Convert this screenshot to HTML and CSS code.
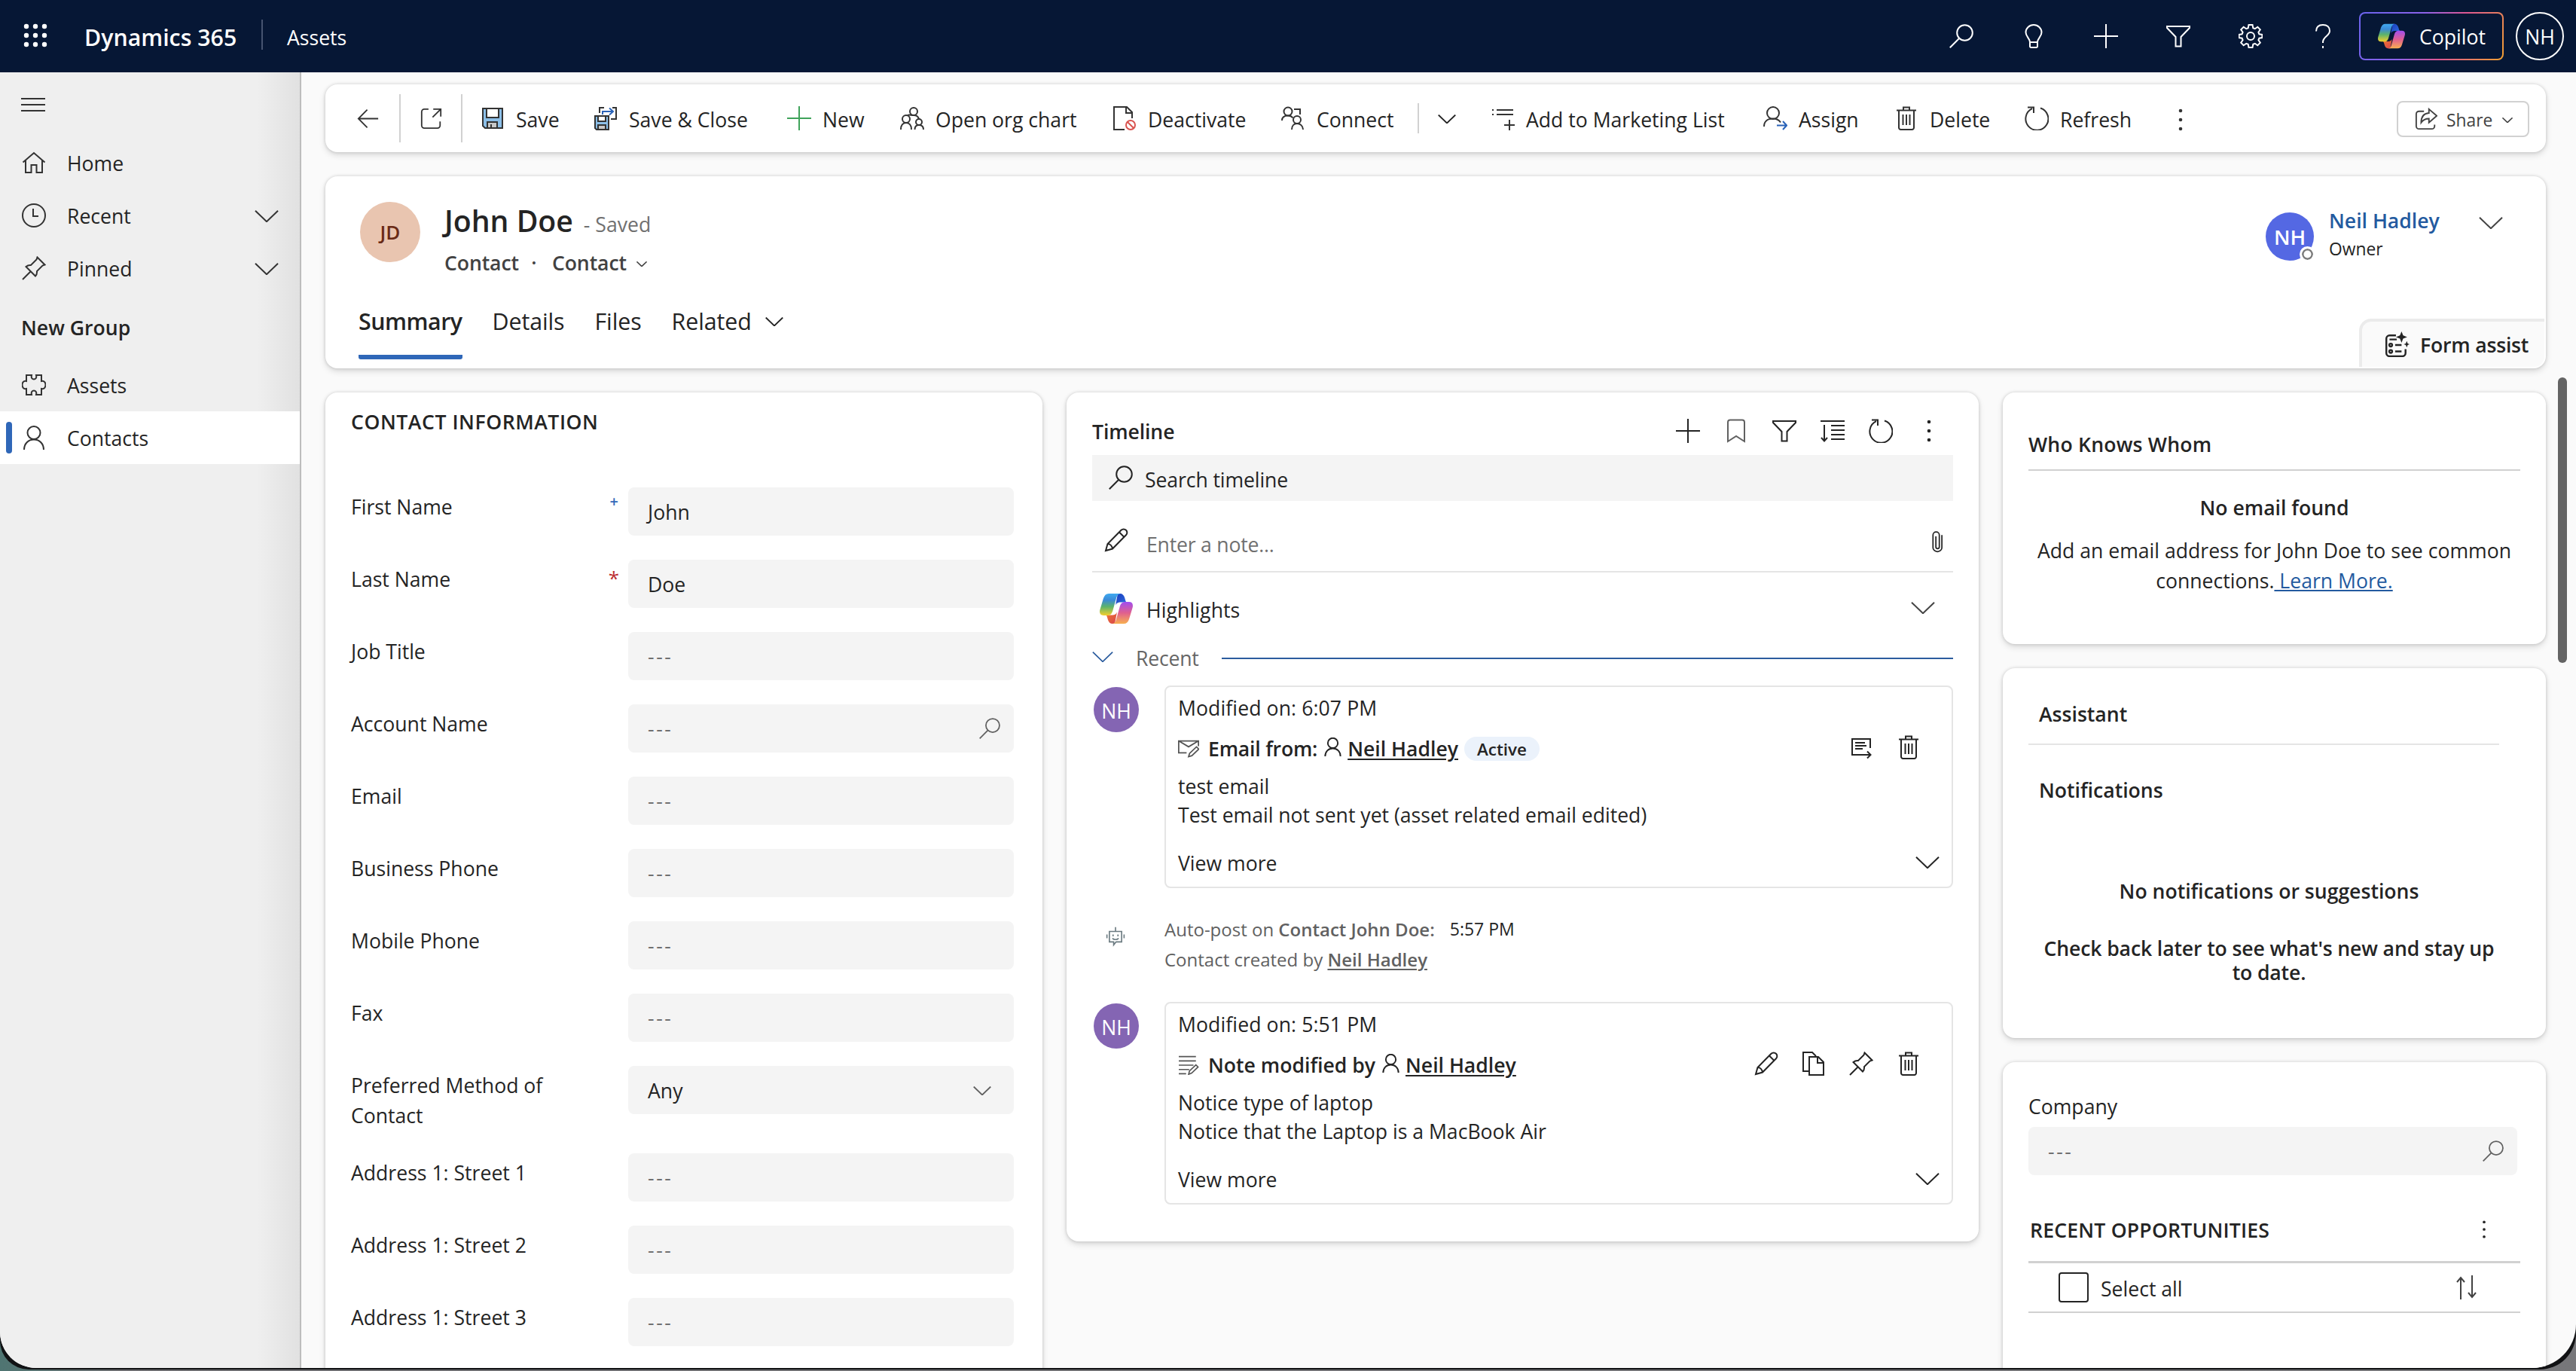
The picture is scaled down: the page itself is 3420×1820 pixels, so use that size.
FILE: index.html
```html
<!DOCTYPE html>
<html lang="en">
<head>
<meta charset="utf-8">
<title>Contact: John Doe - Dynamics 365</title>
<link rel="stylesheet" href="styles.css">
</head>
<body>
<svg class="defs" width="0" height="0" aria-hidden="true">
  <defs>
    <linearGradient id="cpA" x1="0" y1="0" x2="0" y2="1"><stop offset="0" stop-color="#3fa9f0"/><stop offset=".3" stop-color="#3b8ad6"/><stop offset=".6" stop-color="#5cb36b"/><stop offset="1" stop-color="#f4cf2c"/></linearGradient>
    <linearGradient id="cpB" x1="0" y1="0" x2="0" y2="1"><stop offset="0" stop-color="#a04df0"/><stop offset=".5" stop-color="#e0608f"/><stop offset="1" stop-color="#f8b050"/></linearGradient>
    <linearGradient id="cpC" x1="0" y1="0" x2="1" y2="1"><stop offset="0" stop-color="#1a3bbd"/><stop offset="1" stop-color="#2f6fe0"/></linearGradient>
    <linearGradient id="cpD" x1="0" y1="0" x2="1" y2="1"><stop offset="0" stop-color="#f07a2c"/><stop offset="1" stop-color="#d8434f"/></linearGradient>
  </defs>
  <symbol id="copilot" viewBox="0 0 44 40">
    <path fill="url(#cpC)" d="M24 0h3c3 0 5 2 6 5l1.500 5c.5 1 1 1.500 2 1.500H28c-4 0-5.500 1-7 4z"/>
    <path fill="url(#cpD)" d="M20 40h-3c-3 0-5-2-6-5l-1.500-5c-.5-1-1-1.500-2-1.500H16c4 0 5.500-1 7-4z"/>
    <path fill="url(#cpA)" d="M12 0h16c-3 0-5 2-6 6l-4.500 16c-1.300 5-3.500 7-7.500 7H5c-4 0-6-3-4.500-8L5 6C6.500 2 8.500 0 12 0z"/>
    <path fill="url(#cpB)" d="M32 40H16c3 0 5-2 6-6l4.500-16c1.300-5 3.500-7 7.500-7h5c4 0 6 3 4.500 8L39 34c-1.500 4-3.500 6-7 6z"/>
  </symbol>
  <symbol id="search" viewBox="0 0 32 32"><circle cx="20.500" cy="11.500" r="10.300"/><path d="M13 19 .8 31.200"/></symbol>
  <symbol id="bulb" viewBox="0 0 32 32"><path d="M11 24c0-5-5.500-7.500-5.500-13a10.500 10 0 0 1 21 0c0 5.500-5.500 8-5.500 13zM11 24v5.500a1.500 1.500 0 0 0 1.500 1.500h7a1.500 1.500 0 0 0 1.500-1.500V24"/></symbol>
  <symbol id="plus" viewBox="0 0 32 32"><path d="M16 0v32M0 16h32"/></symbol>
  <symbol id="filter" viewBox="0 0 32 32"><path d="M1 3h30v2L19.500 17v12.500h-7V17L1 5z"/></symbol>
  <symbol id="gear" viewBox="0 0 32 32"><circle cx="16" cy="16" r="5"/><path d="M13.500 1h5l.8 4.200 2.500 1 3.500-2.400 3.500 3.500-2.400 3.500 1 2.500 4 .7v4l-4 .7-1 2.500 2.400 3.500-3.500 3.500-3.500-2.400-2.500 1-.8 4.200h-5l-.8-4.200-2.500-1-3.500 2.400-3.500-3.500 2.400-3.500-1-2.500-4-.7v-4l4-.7 1-2.500-2.400-3.500 3.500-3.500 3.500 2.400 2.500-1z"/></symbol>
  <symbol id="help" viewBox="0 0 32 32"><path d="M7 9.500C7 4 10.500 1 16 1s9 3 9 8c0 7-9 7-9 15v1M16 29v3"/></symbol>
  <symbol id="home" viewBox="0 0 32 32"><path d="M1.500 15.500 16 3l14.500 12.500M5 13v16h7.500V19h7v10H27V13"/></symbol>
  <symbol id="clock" viewBox="0 0 32 32"><circle cx="16" cy="16" r="15"/><path d="M15 7v10h7"/></symbol>
  <symbol id="pin" viewBox="0 0 32 32"><path d="M20.500 1.500 30.500 11.500l-3 1-7.500 7.500c.3 3-.5 5-2 6.500L5.500 14c2-1.700 4-2.300 6.500-2l7.500-7.500zM11.500 20.500 1 31"/></symbol>
  <symbol id="puzzle" viewBox="0 0 32 32"><path d="M6 3h7c-1 4 1 5.500 3 5.500S20 7 19 3h7v8c4-1 5.500 2.500 5.500 5S30 22 26 21v8h-7c1-4-1-5.500-3-5.500S12 25 13 29H6v-8c-4 1-5.500-2.500-5.500-5S2 10 6 11z"/></symbol>
  <symbol id="person" viewBox="0 0 32 32"><circle cx="16" cy="9.500" r="8.500"/><path d="M3 32c0-8 5.500-13.500 13-13.500S29 24 29 32"/></symbol>
  <symbol id="chev" viewBox="0 0 32 16"><path d="M1 .8 16 15.200 31 .8"/></symbol>
  <symbol id="back" viewBox="0 0 32 32"><path d="M31 16H2M15 3 2 16l13 13"/></symbol>
  <symbol id="popout" viewBox="0 0 32 32"><path d="M12 2H6a4 4 0 0 0-4 4v20a4 4 0 0 0 4 4h19a4 4 0 0 0 4-4v-6M19 2h11v11M30 2 18 14"/></symbol>
  <symbol id="save" viewBox="0 0 32 32"><path fill="#8cbfe8" d="M3 3h26v26H6l-3-3z"/><path fill="#fff" d="M8 3h16v12H8z"/><path fill="#c8c8c8" d="M9 21h13v8H9z"/><path d="M14 24v5"/></symbol>
  <symbol id="saveclose" viewBox="0 0 32 32"><path fill="#8cbfe8" d="M2 13h18v18H4l-2-2z"/><path fill="#fff" d="M6 13h10v7H6z"/><path fill="#c8c8c8" d="M6 25h10v6H6z"/><path d="M8 9V2h6M25 2h5v15h-7"/><path stroke="#2a63b8" d="M12 11V7h14M21 2.500 26 7l-5 4.500"/></symbol>
  <symbol id="org" viewBox="0 0 32 32"><circle cx="18" cy="7" r="5"/><circle cx="8" cy="17" r="5"/><circle cx="25" cy="21" r="4"/><path d="M10 12c2-1 4 0 8 0s6 1 7 5M1 31c0-6 3-9 7-9s7 3 7 9M19.500 31c0-4 2-6 5.500-6s6 2 6 6"/></symbol>
  <symbol id="deact" viewBox="0 0 32 32"><path d="M16 31H2V1h17l7 7v8M18 1v8h8"/><g stroke="#d9534f"><circle cx="24" cy="25" r="6"/><path d="m20 21 8 8"/></g></symbol>
  <symbol id="connect" viewBox="0 0 32 32"><circle cx="9" cy="7" r="5.500"/><path d="M1 19c0-4 3-6.500 8-6.500 3 0 5 1 6.500 3M17 4h8v7"/><circle cx="21" cy="18" r="5"/><path d="M14 31c0-5 3-8 7-8s8 3 8 8"/></symbol>
  <symbol id="mlist" viewBox="0 0 32 32"><path d="M2 5h2M8 5h22M2 11h2M8 11h22M25 18v14M18 25h14"/></symbol>
  <symbol id="assign" viewBox="0 0 32 32"><circle cx="13" cy="9" r="8"/><path d="M1 27c0-7 5-10.500 12-10.500 5 0 8 2 10 5"/><path stroke="#2a63b8" d="M18 25.500h13M26 20l5 5.500-5 5.500"/></symbol>
  <symbol id="trash" viewBox="0 0 32 32"><path d="M3 5.500h26M12 5V1.500h8V5M6 6v22.500A2.500 2.500 0 0 0 8.500 31h15a2.500 2.500 0 0 0 2.500-2.500V6M11.500 11v14M16 11v14M20.500 11v14"/></symbol>
  <symbol id="refresh" viewBox="0 0 32 32"><path d="M21 2.500A15 15 0 1 1 10 3.200M4 1.500h8v7.500"/></symbol>
  <symbol id="share" viewBox="0 0 32 32"><path d="M13 5H6a4 4 0 0 0-4 4v17a4 4 0 0 0 4 4h18a4 4 0 0 0 4-4v-2M20 2l11 9.500L20 21v-5.500c-5 0-8 1-11 5.500 0-8 4-13 11-13.500z"/></symbol>
  <symbol id="form" viewBox="0 0 32 32"><path d="M15 5H7a4 4 0 0 0-4 4v18a4 4 0 0 0 4 4h16a4 4 0 0 0 4-4v-5M7 10h9M14 17h8M14 25h8"/><circle cx="8.500" cy="17" r="1.800"/><circle cx="8.500" cy="25" r="1.800"/><path fill="currentColor" stroke="none" d="m22 0 2 5 5 2-5 2-2 5-2-5-5-2 5-2zM28.500 12l1.200 3 2.600 1-2.600 1-1.200 3-1.200-3-2.600-1 2.600-1z"/></symbol>
  <symbol id="bookmark" viewBox="0 0 32 32"><path d="M5 30V4.500A3 3 0 0 1 8 1.500h16a3 3 0 0 1 3 3V30l-11-7z"/></symbol>
  <symbol id="sortlist" viewBox="0 0 32 32"><path d="M0 3h32M14 9h18M14 15h18M14 21h18M14 27h18M5 8v21M1 25l4 4.500L9 25"/></symbol>
  <symbol id="pencil" viewBox="0 0 32 32"><path d="m2 30 2.500-9L22.500 2.800a4.500 4.500 0 0 1 6.500 6.500L11 27.500zM20 5.500l6.500 6.500M4.500 21c3.500 0 6 3 6.500 6.500"/></symbol>
  <symbol id="clip" viewBox="0 0 16 32"><path d="M15 6v19a6.500 6 0 0 1-13.500 0V6a4.800 4.800 0 0 1 9.600 0v18a2.600 2.600 0 0 1-5.200 0V8"/></symbol>
  <symbol id="mailedit" viewBox="0 0 32 28"><path d="M13 20H1V2h30v8M1 2l15 9L31 2M16 26l1.500-5L28 11l3.500 3.500L21 24.500z"/></symbol>
  <symbol id="noteedit" viewBox="0 0 32 32"><path d="M0 2h28M0 9h28M0 16h24M0 23h17M0 30h12M16 31l1.500-5.500L28 15.500l3.500 3.500L21 29z"/></symbol>
  <symbol id="card" viewBox="0 0 32 32"><path d="M19 26H4V5h24v12M8 10h13M8 14h15M8 18h10M18 26h10M24 21.500l4.500 4.500-4.500 4.500"/></symbol>
  <symbol id="copy" viewBox="0 0 32 32"><path d="M10 26H2V1h12l5 5M10 7h12l7 7v17H10zM21 7v8h8"/></symbol>
  <symbol id="bot" viewBox="0 0 32 32"><path d="M6 8h20v17H17l-4 5v-5H6zM16 8V1M2 13v6M30 13v6M12 13v3M20 13v3M11 19c2 3 8 3 10 0"/></symbol>
  <symbol id="sort" viewBox="0 0 32 32"><path d="M8 32V3M3 9l5-6 5 6M23 0v29M18 23l5 6 5-6"/></symbol>
  <symbol id="dots" viewBox="0 0 8 32"><g fill="currentColor" stroke="none"><circle cx="4" cy="4" r="2.300"/><circle cx="4" cy="16" r="2.300"/><circle cx="4" cy="28" r="2.300"/></g></symbol>
  <symbol id="waffle" viewBox="0 0 32 32"><g fill="#fff" stroke="none"><circle cx="4" cy="4" r="3.200"/><circle cx="16" cy="4" r="3.200"/><circle cx="28" cy="4" r="3.200"/><circle cx="4" cy="16" r="3.200"/><circle cx="16" cy="16" r="3.200"/><circle cx="28" cy="16" r="3.200"/><circle cx="4" cy="28" r="3.200"/><circle cx="16" cy="28" r="3.200"/><circle cx="28" cy="28" r="3.200"/></g></symbol>
</svg>

<div class="frame">
<div class="window">
  <header class="topbar">
    <svg class="ic waffle"><use href="#waffle"/></svg>
    <span class="brand">Dynamics 365</span>
    <span class="app">Assets</span>
    <nav class="topicons">
      <svg class="ic"><use href="#search"/></svg>
      <svg class="ic"><use href="#bulb"/></svg>
      <svg class="ic"><use href="#plus"/></svg>
      <svg class="ic"><use href="#filter"/></svg>
      <svg class="ic"><use href="#gear"/></svg>
      <svg class="ic"><use href="#help"/></svg>
    </nav>
    <button class="copilot"><svg class="logo"><use href="#copilot"/></svg>Copilot</button>
    <span class="me">NH</span>
  </header>

  <div class="shell">
    <aside class="sidebar">
      <div class="burger"><i></i><i></i><i></i></div>
      <a class="nav"><svg class="ic"><use href="#home"/></svg>Home</a>
      <a class="nav"><svg class="ic"><use href="#clock"/></svg>Recent<svg class="chev"><use href="#chev"/></svg></a>
      <a class="nav"><svg class="ic"><use href="#pin"/></svg>Pinned<svg class="chev"><use href="#chev"/></svg></a>
      <div class="navgroup">New Group</div>
      <a class="nav"><svg class="ic"><use href="#puzzle"/></svg>Assets</a>
      <a class="nav current"><svg class="ic"><use href="#person"/></svg>Contacts</a>
    </aside>

    <main class="main">
      <section class="card commands">
        <span class="cmd back"><svg class="ic"><use href="#back"/></svg></span>
        <span class="cmd pop"><svg class="ic"><use href="#popout"/></svg></span>
        <span></span>
        <span class="cmd"><svg class="ic"><use href="#save"/></svg>Save</span>
        <span class="cmd"><svg class="ic"><use href="#saveclose"/></svg>Save &amp; Close</span>
        <span class="cmd"><svg class="ic green"><use href="#plus"/></svg>New</span>
        <span class="cmd"><svg class="ic black"><use href="#org"/></svg>Open org chart</span>
        <span class="cmd"><svg class="ic"><use href="#deact"/></svg>Deactivate</span>
        <span class="cmd split"><svg class="ic"><use href="#connect"/></svg>Connect</span>
        <span class="cmd more"><svg class="chev sm"><use href="#chev"/></svg></span>
        <span class="cmd"><svg class="ic black"><use href="#mlist"/></svg>Add to Marketing List</span>
        <span class="cmd"><svg class="ic"><use href="#assign"/></svg>Assign</span>
        <span class="cmd"><svg class="ic"><use href="#trash"/></svg>Delete</span>
        <span class="cmd"><svg class="ic"><use href="#refresh"/></svg>Refresh</span>
        <span class="cmd overflow"><svg class="dots"><use href="#dots"/></svg></span>
        <span></span>
        <span class="share"><svg class="ic"><use href="#share"/></svg>Share<svg class="chev xs"><use href="#chev"/></svg></span>
      </section>

      <section class="card record">
        <div class="recordtop">
          <span class="avatar jd">JD</span>
          <div class="who">
            <div class="titleline"><h1>John Doe</h1><span class="saved">- Saved</span></div>
            <div class="crumb"><span>Contact</span><b>·</b><span>Contact</span><svg class="chev xs"><use href="#chev"/></svg></div>
          </div>
          <div class="owner">
            <span class="avatar nh">NH<i class="presence"></i></span>
            <div class="ownertext"><span class="ownername">Neil Hadley</span><span class="ownerrole">Owner</span></div>
            <svg class="chev"><use href="#chev"/></svg>
          </div>
        </div>
        <div class="tabs">
          <span class="tab on">Summary</span><span class="tab">Details</span><span class="tab">Files</span><span class="tab">Related<svg class="chev sm"><use href="#chev"/></svg></span>
        </div>
        <div class="assist"><svg class="ic"><use href="#form"/></svg>Form assist</div>
      </section>

      <div class="columns">
        <section class="card contact">
          <h2>CONTACT INFORMATION</h2>
          <div class="fields">
            <div class="row"><label>First Name<sup class="rec">+</sup></label><div class="input">John</div></div>
            <div class="row"><label>Last Name<sup class="req">*</sup></label><div class="input">Doe</div></div>
            <div class="row"><label>Job Title</label><div class="input empty">---</div></div>
            <div class="row"><label>Account Name</label><div class="input empty">---<svg class="ic"><use href="#search"/></svg></div></div>
            <div class="row"><label>Email</label><div class="input empty">---</div></div>
            <div class="row"><label>Business Phone</label><div class="input empty">---</div></div>
            <div class="row"><label>Mobile Phone</label><div class="input empty">---</div></div>
            <div class="row"><label>Fax</label><div class="input empty">---</div></div>
            <div class="row"><label>Preferred Method of Contact</label><div class="input">Any<svg class="chev sm"><use href="#chev"/></svg></div></div>
            <div class="row"><label>Address 1: Street 1</label><div class="input empty">---</div></div>
            <div class="row"><label>Address 1: Street 2</label><div class="input empty">---</div></div>
            <div class="row"><label>Address 1: Street 3</label><div class="input empty">---</div></div>
          </div>
        </section>

        <section class="card timeline">
          <div class="tlhead">
            <h2>Timeline</h2>
            <div class="tltools">
              <svg class="ic"><use href="#plus"/></svg>
              <svg class="ic grey"><use href="#bookmark"/></svg>
              <svg class="ic"><use href="#filter"/></svg>
              <svg class="ic"><use href="#sortlist"/></svg>
              <svg class="ic"><use href="#refresh"/></svg>
              <svg class="dots"><use href="#dots"/></svg>
            </div>
          </div>
          <div class="tlsearch"><svg class="ic"><use href="#search"/></svg>Search timeline</div>
          <div class="tlnote"><svg class="ic"><use href="#pencil"/></svg><span>Enter a note...</span><svg class="clip"><use href="#clip"/></svg></div>
          <div class="tlhigh"><svg class="logo"><use href="#copilot"/></svg><span>Highlights</span><svg class="chev"><use href="#chev"/></svg></div>
          <div class="tlrecent"><svg class="chev"><use href="#chev"/></svg><span>Recent</span><hr></div>

          <article class="entry">
            <span class="avatar small">NH</span>
            <div class="entrycard">
              <p class="when">Modified on: 6:07 PM</p>
              <div class="entrytitle"><svg class="kind"><use href="#mailedit"/></svg><b class="tight">Email from:</b><svg class="pers"><use href="#person"/></svg><a>Neil Hadley</a><span class="pill">Active</span>
                <div class="actions"><svg class="ic"><use href="#card"/></svg><svg class="ic"><use href="#trash"/></svg></div></div>
              <p>test email</p>
              <p>Test email not sent yet (asset related email edited)</p>
              <div class="viewmore">View more<svg class="chev"><use href="#chev"/></svg></div>
            </div>
          </article>

          <article class="autopost">
            <svg class="bot"><use href="#bot"/></svg>
            <div>
              <p>Auto-post on <b>Contact John Doe:</b><span class="time">5:57 PM</span></p>
              <p>Contact created by <a>Neil Hadley</a></p>
            </div>
          </article>

          <article class="entry">
            <span class="avatar small">NH</span>
            <div class="entrycard">
              <p class="when">Modified on: 5:51 PM</p>
              <div class="entrytitle"><svg class="kind"><use href="#noteedit"/></svg><b>Note modified by</b><svg class="pers"><use href="#person"/></svg><a>Neil Hadley</a>
                <div class="actions"><svg class="ic"><use href="#pencil"/></svg><svg class="ic"><use href="#copy"/></svg><svg class="ic"><use href="#pin"/></svg><svg class="ic"><use href="#trash"/></svg></div></div>
              <p>Notice type of laptop</p>
              <p>Notice that the Laptop is a MacBook Air</p>
              <div class="viewmore">View more<svg class="chev"><use href="#chev"/></svg></div>
            </div>
          </article>
        </section>

        <div class="side">
          <section class="card wkw">
            <h2>Who Knows Whom</h2>
            <h3>No email found</h3>
            <p>Add an email address for John Doe to see common connections.<a> Learn More.</a></p>
          </section>
          <section class="card assistant">
            <h2>Assistant</h2>
            <h3>Notifications</h3>
            <div class="none">No notifications or suggestions</div>
            <div class="check">Check back later to see what's new and stay up to date.</div>
          </section>
          <section class="card company">
            <div class="complabel">Company</div>
            <div class="input empty">---<svg class="ic"><use href="#search"/></svg></div>
            <div class="opphead"><h2>RECENT OPPORTUNITIES</h2><svg class="dots"><use href="#dots"/></svg></div>
            <div class="selectall"><i class="checkbox"></i><span>Select all</span><svg class="ic"><use href="#sort"/></svg></div>
          </section>
        </div>
      </div>
      <div class="scrollthumb"></div>
    </main>
  </div>
</div>
</div>
</body>
</html>
```

FILE: styles.css
```css
* { box-sizing: border-box; }
body {
  margin: 0;
  height: 1820px;
  overflow: hidden;
  background: linear-gradient(90deg, #4f7572 0, #6d6d70 160px, #77777a 100%);
  font: 400 26.6px/40px "Open Sans", "Noto Sans", sans-serif;
  color: #242424;
}
h1, h2, h3, p { margin: 0; font-weight: 600; font-size: inherit; }
p { font-weight: 400; }
b { font-weight: 600; }
.defs { position: absolute; }
.frame { height: 1818px; background: #111214; border-radius: 0 0 48px 38px; overflow: hidden; }
.window { height: 1816px; display: flex; flex-direction: column; background: #fafafa; border-radius: 0 0 58px 48px; overflow: hidden; }

.ic { width: 32px; height: 32px; flex: none; }
.ic, .chev, .kind, .pers, .clip, .bot, .dots { fill: none; stroke: currentColor; stroke-width: 2; flex: none; overflow: visible; }
.chev { width: 32px; height: 16px; }
.chev.sm { width: 24px; height: 12px; stroke-width: 2.6; }
.chev.xs { width: 14px; height: 7px; stroke-width: 3.6; }
.dots { width: 8px; height: 32px; }
.green { stroke: #3fa35a; color: #3fa35a; }
.black { color: #000; }
.grey { color: #616161; }
.card { background: #fff; border-radius: 16px; box-shadow: 0 0 4px rgba(0,0,0,.16), 0 4px 8px rgba(0,0,0,.13); }
.avatar { display: flex; align-items: center; justify-content: center; border-radius: 50%; flex: none; }

/* Top bar */
.topbar { height: 96px; flex: none; display: flex; align-items: center; background: #061735; color: #fff; padding: 0 16px 0 31px; }
.topbar .waffle { margin-top: -2px; }
.brand { font-size: 30.3px; font-weight: 600; margin-left: 49px; width: 235px; padding-top: 3px; }
.app { border-left: 2px solid #465470; height: 40px; line-height: 42px; padding: 3px 0 0 32px; margin-bottom: 4px; flex: 1; }
.topicons { display: flex; gap: 64px; margin-right: 32px; }
.copilot { width: 192px; height: 64px; border: 2px solid transparent; border-radius: 8px; color: #fff; font: inherit; padding: 2px 0 0 23px; display: flex; align-items: center; gap: 19px; background: linear-gradient(#061735, #061735) padding-box, linear-gradient(120deg, #6a63ec 0, #8b62ea 38%, #dd5793 62%, #f0a030 100%) border-box; }
.copilot .logo { width: 36px; height: 34px; flex: none; margin-top: -2px; }
.me { width: 64px; height: 64px; margin-left: 16px; border: 2px solid #fff; border-radius: 50%; text-align: center; line-height: 63px; }

.shell { flex: 1; display: flex; min-height: 0; }

/* Sidebar */
.sidebar { width: 400px; flex: none; padding-top: 34px; border-right: 2px solid #bdbdbd; background: linear-gradient(90deg, rgba(0,0,0,0) 340px, rgba(0,0,0,.06) 398px), #efefef; }
.burger { height: 51px; padding-left: 28px; display: flex; flex-direction: column; gap: 6px; }
.burger i { width: 32px; height: 2px; background: #333; }
.nav { height: 70px; display: flex; align-items: center; gap: 28px; padding: 2px 28px 0 29px; }
.nav .chev { margin-left: auto; color: #333; }
.nav .ic { color: #333; margin-top: -2px; }
.navgroup { height: 85px; line-height: 88px; padding-left: 28px; font-weight: 600; }
.current { background: #fff; position: relative; }
.current::before { content: ""; position: absolute; left: 8px; top: 14px; width: 8px; height: 42px; border-radius: 4px; background: #2f67b8; }

/* Main */
.main { flex: 1; min-width: 0; padding: 16px 40px 0 32px; position: relative; }
.scrollthumb { position: absolute; left: 2996px; top: 405px; width: 12px; height: 379px; border-radius: 6px; background: #646464; }

.commands { height: 90px; display: grid; align-items: center; padding-right: 22px;
  grid-template-columns: 100px 82px 24px 150px 257px 150px 282px 224px 183px 95px 362px 174px 173px 195px 24px 1fr 176px; }
.cmd { display: flex; align-items: center; gap: 15px; white-space: nowrap; padding-top: 4px; }
.cmd .ic { color: #333; margin-top: -4px; }
.cmd .ic.green { color: #3fa35a; }
.back, .pop { height: 64px; border-right: 2px solid #d1d1d1; justify-content: center; }
.back { padding-left: 14px; }
.back .ic, .pop .ic { width: 29px; height: 29px; }
.split { height: 40px; border-right: 2px solid #d1d1d1; }
.more { padding-left: 25px; padding-top: 2px; }
.overflow { justify-content: center; color: #333; }
.share { height: 48px; border: 2px solid #d1d1d1; border-radius: 8px; display: flex; align-items: center; padding: 3px 0 0 22px; font-size: 22.8px; color: #424242; margin-top: 2px; }
.share .ic { width: 30px; height: 30px; margin: -3px 12px 0 0; }
.share .chev { margin-left: 13px; }

.record { height: 255px; margin-top: 32px; position: relative; }
.recordtop { display: flex; height: 161px; padding: 34px 57px 0 46px; }
.jd { width: 80px; height: 80px; background: #e9c5b0; color: #6a2a15; font-weight: 600; font-size: 26px; }
.who { margin-left: 32px; flex: 1; }
.titleline { display: flex; align-items: baseline; gap: 14px; height: 61px; }
h1 { font-size: 39.2px; line-height: 50px; }
.saved { color: #707070; }
.crumb { display: flex; align-items: center; font-weight: 600; color: #424242; letter-spacing: -.1px; }
.crumb b { width: 44px; text-align: center; padding-right: 4px; }
.crumb .chev { margin-left: 13px; margin-top: 2px; }
.owner { display: flex; }
.nh { width: 64px; height: 64px; margin-top: 14px; background: #5468e3; color: #fff; font-weight: 600; position: relative; font-size: 27.500px; padding-top: 1px; }
.presence { position: absolute; right: -2px; bottom: -2px; width: 21px; height: 21px; border-radius: 50%; background: #fff; border: 3px solid #fff; box-shadow: inset 0 0 0 2.500px #7a7a7a; }
.ownertext { margin-left: 20px; width: 199px; display: flex; flex-direction: column; padding-top: 5px; }
.ownername { color: #235a9f; font-weight: 600; }
.ownerrole { font-size: 22.8px; line-height: 35px; }
.owner > .chev { margin-top: 20px; color: #424242; }
.tabs { display: flex; padding-left: 44px; font-size: 30.4px; height: 94px; }
.tab { margin-right: 40px; height: 82px; padding-top: 11px; display: flex; line-height: 42px; letter-spacing: -.1px; }
.tab.on { font-weight: 600; border-bottom: 6px solid #2f67b8; border-radius: 3px; letter-spacing: -.5px; }
.tab .chev { margin: 15px 0 0 18px; }
.assist { position: absolute; right: 2px; bottom: 2px; width: 246px; height: 64px; background: #fafafa; border: solid #ebebeb; border-width: 4px 0 0 4px; border-radius: 16px 0 14px 0; display: flex; align-items: center; padding: 2px 0 0 29px; gap: 14px; font-weight: 600; letter-spacing: -.2px; white-space: nowrap; }
.assist .ic { width: 34px; height: 34px; stroke-width: 2.300; margin-top: -3px; }

.columns { display: grid; grid-template-columns: 952px 1211px 721px; gap: 32px; margin-top: 32px; align-items: start; }

/* Contact information */
.contact { height: 1400px; padding: 19px 38px 0 34px; }
.contact h2 { letter-spacing: .55px; }
.fields { margin-top: 67px; display: flex; flex-direction: column; gap: 32px; }
.row { display: grid; grid-template-columns: 368px 512px; align-items: start; height: 64px; }
.row:nth-child(9) { height: 84px; }
.row label { padding: 6px 60px 0 0; width: 358px; position: relative; }
.row sup { position: absolute; right: 3px; top: 9px; font-size: 20px; line-height: 20px; font-weight: 600; }
.rec { color: #2f67b8; }
.row .req { color: #bc2f32; font-size: 26px; top: 14px; right: 2px; font-weight: 400; }
.input { height: 64px; background: #f4f4f4; border-radius: 8px; padding: 2px 18px 0 26px; display: flex; align-items: center; justify-content: space-between; }
.input.empty { color: #707070; letter-spacing: 2.600px; padding-top: 0; }
.input .ic { width: 28px; height: 28px; color: #616161; }
.input .chev { margin-right: 12px; color: #616161; }

/* Timeline */
.timeline { height: 1127px; padding: 31px 34px 0; }
.tlhead { height: 52px; display: flex; justify-content: space-between; }
.tlhead h2 { padding-top: 1px; letter-spacing: -.1px; }
.tltools { display: flex; gap: 32px; padding: 4px 28px 0 0; }
.tltools .dots { margin-left: 12px; }
.tlsearch { height: 61px; background: #f4f4f4; display: flex; align-items: center; padding: 4px 0 0 22px; gap: 16px; letter-spacing: -.1px; }
.tlsearch .ic { margin-top: -5px; }
.tlnote { height: 95px; border-bottom: 2px solid #e5e5e5; display: flex; align-items: center; padding: 20px 14px 0 16px; color: #242424; }
.tlnote span { color: #707070; margin: 2px auto 0 24px; letter-spacing: -.2px; }
.tlnote .ic { margin-top: -10px; }
.clip { width: 14px; height: 32px; margin-top: -6px; }
.tlhigh { height: 97px; display: flex; align-items: center; padding: 0 24px 0 10px; }
.tlhigh .logo { width: 44px; height: 40px; margin-top: -1px; }
.tlhigh span { margin: 2px auto 0 18px; letter-spacing: .1px; }
.tlhigh .chev { margin-top: -4px; color: #424242; }
.tlrecent { height: 40px; display: flex; align-items: center; color: #666; margin-top: -3px; }
.tlrecent .chev { width: 28px; height: 14px; color: #2b5c9e; margin-top: -4px; }
.tlrecent span { margin-left: 30px; width: 114px; letter-spacing: -.2px; }
.tlrecent hr { flex: 1; border: 0; height: 2px; background: #2b5c9e; margin: 0 0 1px; }
.entry { display: flex; margin-top: 16px; }
.small { width: 60px; height: 60px; margin: 2px 34px 0 2px; background: #8465b3; color: #fff; padding-top: 3px; }
.entrycard { flex: 1; height: 269px; border: 2px solid #e5e5e5; border-radius: 8px; padding: 6px 16px; }
.entrycard p { line-height: 38px; }
.entrycard .when { line-height: 44px; letter-spacing: .1px; }
.entrytitle { height: 63px; display: flex; align-items: center; white-space: nowrap; }
.kind { width: 28px; height: 26px; margin-right: 12px; color: #555; }
.tight { letter-spacing: -.2px; }
.pers { width: 25px; height: 25px; margin: -5px 7px 0 8px; stroke-width: 2.500; }
.entrytitle a, .autopost a { font-weight: 600; text-decoration: underline; text-decoration-thickness: 2px; text-underline-offset: 3px; }
.pill { margin-left: 8px; padding: 0 17px; height: 32px; line-height: 33px; border-radius: 16px; background: #ebf2fb; font-size: 22.4px; font-weight: 600; }
.actions { margin: -3px 25px 0 auto; display: flex; gap: 31px; }
.viewmore { margin-top: 24px; display: flex; justify-content: space-between; line-height: 43px; }
.viewmore .chev { margin-top: 12px; }
.autopost { height: 151px; padding-top: 35px; display: flex; color: #616161; font-size: 24px; }
.bot { width: 26px; height: 28px; margin: 15px 52px 0 18px; color: #6b7a80; }
.autopost p { line-height: 39px; }
.time { color: #242424; font-size: 23px; margin-left: 20px; position: relative; top: -1px; }
.autopost + .entry { margin-top: 0; }

/* Right column */
.side { display: grid; gap: 32px; }
.wkw { height: 334px; padding: 49px 34px 0; }
.wkw h2 { height: 55px; border-bottom: 2px solid #d1d1d1; letter-spacing: .2px; }
.wkw h3 { text-align: center; margin: 29px 0 17px; }
.wkw p { text-align: center; }
.wkw a { color: #235a9f; text-decoration: underline; }
.assistant { height: 491px; padding: 41px 62px 0 34px; }
.assistant h2 { padding-left: 14px; height: 61px; border-bottom: 2px solid #e5e5e5; }
.assistant h3 { padding: 40px 0 0 14px; }
.none, .check { text-align: center; font-weight: 600; line-height: 32px; padding-left: 14px; }
.none { margin-top: 98px; }
.check { margin-top: 44px; letter-spacing: -.13px; }
.company { height: 600px; padding: 39px 34px 0; }
.complabel { height: 47px; }
.company .input { margin-right: 4px; }
.opphead { height: 117px; padding: 53px 44px 0 2px; display: flex; justify-content: space-between; border-bottom: 3px solid #d1d1d1; }
.opphead h2 { letter-spacing: .2px; }
.opphead .dots { height: 26px; margin-top: 6px; }
.selectall { height: 66px; display: flex; align-items: center; padding: 0 55px 0 40px; border-bottom: 2px solid #d1d1d1; }
.selectall span { padding-top: 3px; }
.checkbox { width: 40px; height: 40px; border: 2px solid #242424; border-radius: 4px; margin-right: 16px; }
.selectall .ic { margin-left: auto; color: #424242; }
```
